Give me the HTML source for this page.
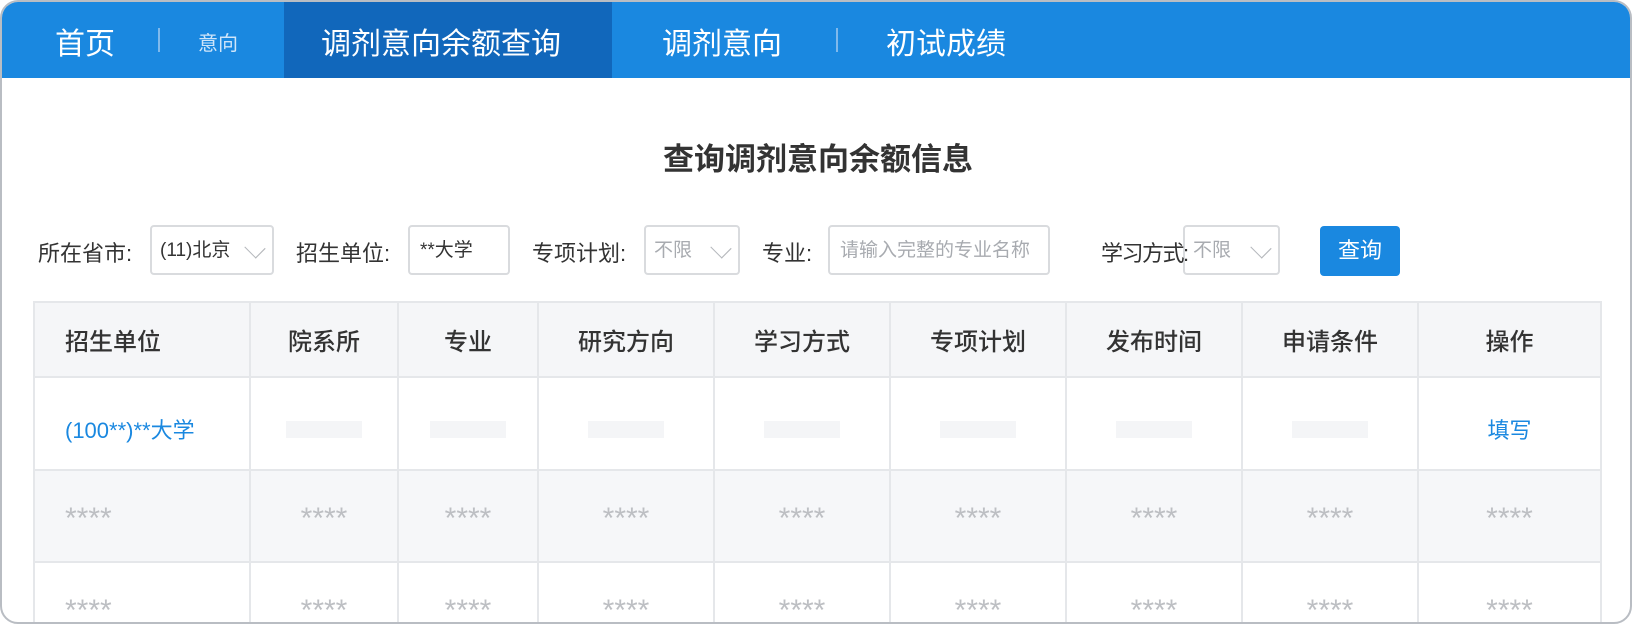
<!DOCTYPE html>
<html><head><meta charset="utf-8"><style>
*{margin:0;padding:0;box-sizing:border-box}
body{width:1632px;height:624px;background:#fff;font-family:"Liberation Sans","Noto Sans CJK SC",sans-serif;overflow:hidden;position:relative}
.frame{position:absolute;left:0;top:0;width:1632px;height:624px;border:2px solid #b9bdc3;border-radius:18px;overflow:hidden;background:#fff}
.nav{position:absolute;left:0;top:0;width:1632px;height:76px;background:#1a88e0}
.t{position:absolute;color:#fff;white-space:nowrap}
.act{position:absolute;left:282px;top:0;width:328px;height:76px;background:#1167bb}
.sep{position:absolute;top:26px;width:2px;height:24px;background:#7fb9ec}
.title{position:absolute;left:0;width:1632px;top:132px;text-align:center;font-size:31px;font-weight:bold;color:#333}
.lab{position:absolute;top:234px;font-size:22px;color:#333;white-space:nowrap;z-index:2}
.box{position:absolute;top:223px;height:50px;border:2px solid #d9dbde;border-radius:4px;font-size:19px;line-height:48px;padding-left:8px;color:#333;white-space:nowrap;background:#fff}
.ph{color:#a8abb0}
.chev{position:absolute;right:10px;top:14px;width:14px;height:14px;border-right:1.5px solid #b5b8bc;border-bottom:1.5px solid #b5b8bc;transform:rotate(45deg) scaleX(1.15);transform-origin:center}
.btn{position:absolute;left:1318px;top:224px;width:80px;height:50px;background:#1a88e0;border-radius:4px;color:#fff;font-size:22px;line-height:50px;text-align:center}
table{position:absolute;left:31px;top:299px;border-collapse:collapse;table-layout:fixed}
td,th{border:2px solid #e5e7ea;text-align:center;font-size:30px;color:#bdbfc3}
th{height:75px;background:#f5f6f8;color:#333;font-size:24px;font-weight:500}
tr.r1 td{height:93px;background:#fff;font-size:22px;padding-top:10px}
tr.r2 td{height:92px;background:#f6f7f9;padding-top:6px}
tr.r3 td{height:92px;background:#fff;padding-top:6px}
td:first-child,th:first-child{text-align:left;padding-left:30px}
.bar{display:inline-block;width:76px;height:17px;background:#f4f5f7;vertical-align:middle}
.lnk{color:#1a88e0}
</style></head><body>
<div class="frame">
<div class="nav">
<div class="act"></div>
<div class="t" style="left:53px;top:17px;font-size:30px">首页</div>
<div class="sep" style="left:156px"></div>
<div class="t" style="left:196px;top:25px;font-size:20px;color:#cfe5f9">意向</div>
<div class="t" style="left:319px;top:17px;font-size:30px">调剂意向余额查询</div>
<div class="t" style="left:660px;top:17px;font-size:30px">调剂意向</div>
<div class="sep" style="left:834px"></div>
<div class="t" style="left:884px;top:17px;font-size:30px">初试成绩</div>
</div>
<div class="title">查询调剂意向余额信息</div>
<div class="lab" style="left:36px">所在省市:</div>
<div class="box" style="left:148px;width:124px">(11)北京<span class="chev"></span></div>
<div class="lab" style="left:294px">招生单位:</div>
<div class="box" style="left:406px;width:102px;padding-left:10px">**大学</div>
<div class="lab" style="left:530px">专项计划:</div>
<div class="box ph" style="left:642px;width:96px">不限<span class="chev"></span></div>
<div class="lab" style="left:760px">专业:</div>
<div class="box ph" style="left:826px;width:222px;padding-left:10px">请输入完整的专业名称</div>
<div class="lab" style="left:1099px;letter-spacing:-1.5px">学习方式:</div>
<div class="box ph" style="left:1181px;width:97px">不限<span class="chev"></span></div>
<div class="btn">查询</div>
<table>
<colgroup><col style="width:216px"><col style="width:148px"><col style="width:140px"><col style="width:176px"><col style="width:176px"><col style="width:176px"><col style="width:176px"><col style="width:176px"><col style="width:183px"></colgroup>
<tr><th>招生单位</th><th>院系所</th><th>专业</th><th>研究方向</th><th>学习方式</th><th>专项计划</th><th>发布时间</th><th>申请条件</th><th>操作</th></tr>
<tr class="r1"><td class="lnk">(100**)**大学</td><td><span class="bar"></span></td><td><span class="bar"></span></td><td><span class="bar"></span></td><td><span class="bar"></span></td><td><span class="bar"></span></td><td><span class="bar"></span></td><td><span class="bar"></span></td><td class="lnk">填写</td></tr>
<tr class="r2"><td>****</td><td>****</td><td>****</td><td>****</td><td>****</td><td>****</td><td>****</td><td>****</td><td>****</td></tr>
<tr class="r3"><td>****</td><td>****</td><td>****</td><td>****</td><td>****</td><td>****</td><td>****</td><td>****</td><td>****</td></tr>
</table>
</div>
</body></html>
